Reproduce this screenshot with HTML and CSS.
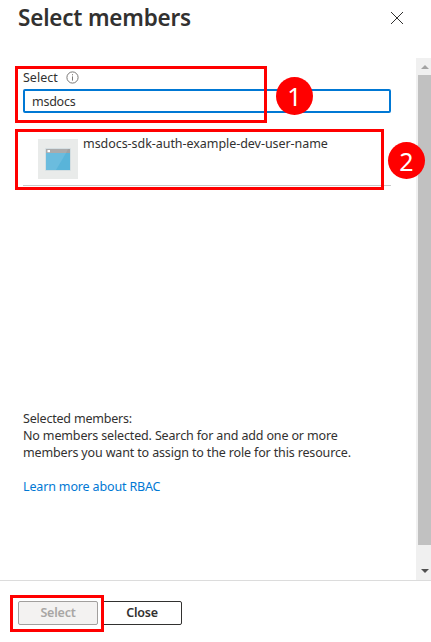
FILE: index.html
```html
<!DOCTYPE html>
<html lang="en">
<head>
<meta charset="utf-8">
<title>Select members</title>
<link rel="stylesheet" href="styles.css">
</head>
<body>
<div class="panel">
  <header class="header">
    <h1 class="title">Select members</h1>
    <svg class="close" width="14" height="14" viewBox="0 0 14 14"><path d="M1 1L13 13M13 1L1 13" stroke="#323130" stroke-width="1" fill="none"/></svg>
  </header>
  <div class="body">
    <main class="content">
      <div class="field-label"><span class="label-text">Select</span>
        <svg width="13" height="13" viewBox="0 0 13 13"><circle cx="6.5" cy="6.5" r="5.6" fill="none" stroke="#797775" stroke-width="1"/><path d="M6.5 5.4V9.6M6.5 3.2V4.3" stroke="#797775" stroke-width="1"/></svg>
      </div>
      <div class="input"><span class="query">msdocs</span></div>
      <div class="result">
        <div class="tile">
          <svg width="26" height="23" viewBox="0 0 26 23">
            <rect x="0" y="0" width="26" height="23" rx="1" fill="#d5dfe2"/>
            <rect x="1" y="1" width="24" height="21" fill="#59b4d9"/>
            <path d="M1 5H21L11 22H1Z" fill="#6bbcde"/>
            <rect x="1" y="1" width="24" height="4" fill="#a0a1a2"/>
            <path d="M1 1H23L21 5H1Z" fill="#aaabac"/>
            <rect x="2.5" y="2" width="2.5" height="2.2" fill="#fff"/>
          </svg>
        </div>
        <span class="name">msdocs-sdk-auth-example-dev-user-name</span>
      </div>
      <section class="selected">
        <div><span class="selected-title">Selected members:</span></div>
        <div><span>No members selected. Search for and add one or more</span></div>
        <div><span>members you want to assign to the role for this resource.</span></div>
        <a class="link"><span>Learn more about RBAC</span></a>
      </section>
    </main>
    <div class="scrollbar">
      <svg class="arrow-up" width="8" height="4" viewBox="0 0 8 4"><path d="M0 4L4 0L8 4Z" fill="#a3a3a3"/></svg>
      <div class="thumb"></div>
      <svg class="arrow-down" width="8" height="4" viewBox="0 0 8 4"><path d="M0 0L4 4L8 0Z" fill="#505050"/></svg>
    </div>
  </div>
  <footer class="footer">
    <div class="button disabled">Select</div>
    <div class="button">Close</div>
  </footer>
  <div class="mark mark-search"></div>
  <div class="mark mark-result"></div>
  <div class="mark mark-button"></div>
  <div class="badge badge-one">1</div>
  <div class="badge badge-two">2</div>
</div>
</body>
</html>
```

FILE: styles.css
```css
* { box-sizing: border-box; }
body { margin: 0; background: #fff; color: #323130; font: 12.5px/17px "Noto Sans", sans-serif; }
svg { display: block; flex: none; }
span { white-space: nowrap; }
.panel { position: relative; width: 431px; height: 642px; overflow: hidden; display: flex; flex-direction: column; }
.header { height: 58px; flex: none; display: flex; justify-content: space-between; align-items: flex-start; padding: 0 27px 0 18px; }
.title { margin: 3px 0 0; font-size: 22.5px; line-height: 30px; font-weight: 600; letter-spacing: -0.2px; white-space: nowrap; }
.close { margin-top: 11px; }
.body { height: 522px; flex: none; display: flex; }
.content { width: 416px; padding: 11px 25px 0 23px; }
.field-label { height: 17px; display: flex; align-items: center; gap: 8px; }
.input { height: 24px; margin-top: 3px; border: 2px solid #0078d4; border-radius: 2px; padding: 2px 7px; line-height: 17px; letter-spacing: -0.25px; }
.result { height: 73px; border-bottom: 1px solid #c8c8c8; display: flex; gap: 5px; padding: 26px 0 0 15px; }
.name { height: 17px; margin-top: -4px; letter-spacing: -0.05px; }
.tile { width: 40px; height: 40px; flex: none; background: #e9ebea; display: flex; align-items: center; justify-content: center; }
.selected { margin-top: 224px; letter-spacing: -0.15px; }
.selected-title { letter-spacing: -0.2px; }
.link { display: block; margin-top: 17px; color: #0078d4; }
.scrollbar { width: 15px; background: #f0f0f0; display: flex; flex-direction: column; align-items: center; }
.arrow-up { margin: 7px 0 6px 2px; }
.thumb { width: 13px; height: 470px; background: #c1c1c1; align-self: flex-end; }
.arrow-down { margin: 24px 0 0 2px; }
.footer { flex: 1; border-top: 1px solid #dcdcdc; display: flex; gap: 4px; padding: 20px 18px; }
.button { width: 80px; height: 24px; border: 1px solid #323130; border-radius: 2px; font-weight: 600; line-height: 21px; text-align: center; letter-spacing: -0.2px; }
.disabled { color: #a8a6a4; background: #f3f2f1; border-color: #a19f9d; }
.mark { position: absolute; border: 3px solid #f00; }
.mark-search { left: 15px; top: 66px; width: 252px; height: 57px; }
.mark-result { left: 15px; top: 129px; width: 369px; height: 61px; }
.mark-button { left: 10px; top: 595px; width: 94px; height: 37px; }
.badge { position: absolute; width: 37px; height: 37px; border-radius: 50%; background: #f00; color: #fff; font-size: 25px; line-height: 38px; text-align: center; }
.badge-one { left: 276px; top: 77px; height: 38px; }
.badge-two { left: 388px; top: 142px; }
```
